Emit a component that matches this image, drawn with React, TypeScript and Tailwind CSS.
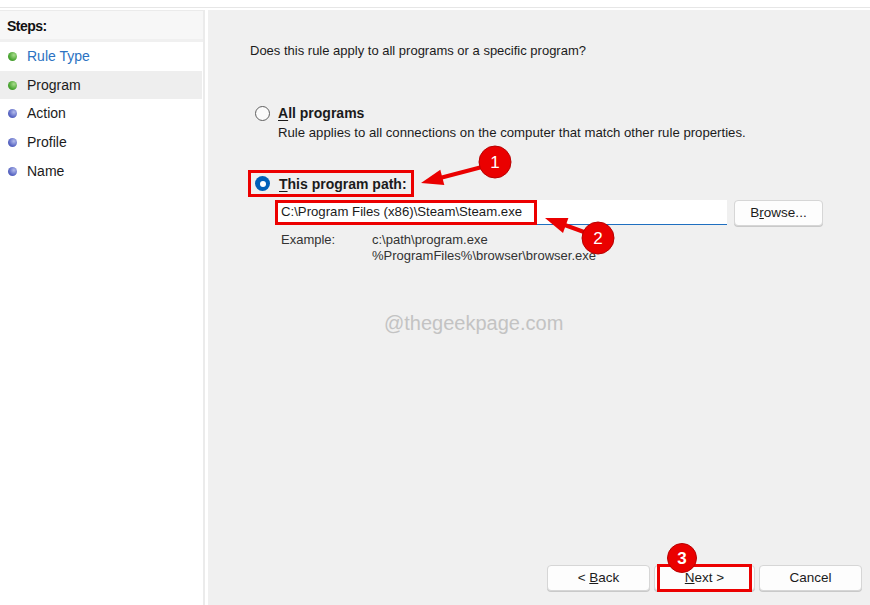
import React from "react";

const font = { fontFamily: '"Liberation Sans", Arial, sans-serif' };

function Step({ label, done, active, link }: { label: string; done?: boolean; active?: boolean; link?: boolean }) {
  return (
    <div className={`flex h-[28.7px] items-center pl-[8px] mr-[1px] ${active ? "bg-[#eeeeee]" : ""}`}>
      <span
        className={`h-[9px] w-[9px] rounded-full ${done ? "bg-[radial-gradient(circle_at_65%_35%,#a8dc8c,#4aa532_60%,#3b8a28)]" : "bg-[radial-gradient(circle_at_65%_35%,#b4bcec,#5a67c4_60%,#4652a8)]"}`}
      />
      <span className={`ml-[10px] text-[14px] ${link ? "text-[#2b72c2]" : "text-[#1b1b1b]"}`}>{label}</span>
    </div>
  );
}

function Btn({ children, w }: { children: React.ReactNode; w: string }) {
  return (
    <div
      className={`${w} flex h-[26px] items-center justify-center rounded-[4px] border border-[#d6d6d6] bg-[#fdfdfd] text-[13.5px] text-[#1b1b1b] shadow-[0_1px_0_#c9c9c9]`}
    >
      {children}
    </div>
  );
}

export default function App() {
  return (
    <div className="relative h-[605px] w-[870px] overflow-hidden bg-white" style={font}>
      <div className="h-[7px]" />
      <div className="h-[1px] bg-[#e6e6e6]" />
      <div className="h-[2px] bg-white" />
      <div className="flex h-[595px]">
        {/* left steps panel */}
        <div className="flex w-[205px] flex-col border-r-[2px] border-t border-[#ebebeb] bg-white">
          <div className="flex h-[28px] flex-col bg-[#f7f7f7]">
            <div className="flex h-[23px] items-end pl-[7px]">
              <span className="text-[14px] font-bold leading-[16px] tracking-[-0.5px] text-[#111]">Steps:</span>
            </div>
          </div>
          <div className="h-[3px] bg-[#f0f0f0]" />
          <div className="flex flex-col">
            <Step label="Rule Type" done link />
            <Step label="Program" done active />
            <Step label="Action" />
            <Step label="Profile" />
            <Step label="Name" />
          </div>
        </div>
        <div className="w-[3px] bg-white" />
        {/* main panel */}
        <div className="flex flex-1 flex-col bg-[#f0f0f0] pl-[42px] text-[13px] text-[#1b1b1b]">
          <div className="mt-[33px] h-[16px] leading-[16px]">Does this rule apply to all programs or a specific program?</div>

          <div className="mt-[46px] flex h-[16px] items-center">
            <span className="ml-[5px] h-[15px] w-[15px] rounded-full border border-[#5f5f5f] bg-[#fbfbfb]" />
            <span className="ml-[8px] text-[14px] font-bold leading-[16px]">
              <span className="underline underline-offset-2">A</span>ll programs
            </span>
          </div>
          <div className="ml-[28px] mt-[4px] h-[16px] text-[13.2px] leading-[16px]">
            Rule applies to all connections on the computer that match other rule properties.
          </div>

          <div className="ml-[-2px] mt-[29px] flex h-[27px] w-[166px] items-center border-[3px] border-[#ec0000] pl-[4px]">
            <span className="flex h-[15px] w-[15px] items-center justify-center rounded-full bg-[#0060b8]">
              <span className="h-[6px] w-[6px] rounded-full bg-white" />
            </span>
            <span className="ml-[9px] whitespace-nowrap text-[14px] font-bold leading-[16px]">
              <span className="underline underline-offset-2">T</span>his program path:
            </span>
          </div>

          <div className="mt-[3px] flex items-start">
            <div className="relative ml-[26px] flex h-[25px] w-[451px] items-center border-b border-[#1f6fc0] bg-white pl-[5px] text-[13.2px]">
              C:\Program Files (x86)\Steam\Steam.exe
              <div className="absolute left-[-1px] top-0 h-[25px] w-[262px] border-[3px] border-[#ec0000]" />
            </div>
            <div className="ml-[7px]">
              <Btn w="w-[89px]">
                <span>
                  B<span className="underline">r</span>owse...
                </span>
              </Btn>
            </div>
          </div>

          <div className="ml-[31px] mt-[6px] flex text-[#333] leading-[16px]">
            <div className="w-[91px]">Example:</div>
            <div className="flex flex-col">
              <span>c:\path\program.exe</span>
              <span>%ProgramFiles%\browser\browser.exe</span>
            </div>
          </div>

          <div className="mt-auto mb-[14px] mr-[8px] flex justify-end">
            <Btn w="w-[103px]">
              <span>
                &lt; <span className="underline">B</span>ack
              </span>
            </Btn>
            <div className="relative ml-[4px]">
              <Btn w="w-[101px]">
                <span>
                  <span className="underline">N</span>ext &gt;
                </span>
              </Btn>
              <div className="absolute left-[3px] top-[-1px] h-[28px] w-[95px] border-[3px] border-[#ec0000]" />
            </div>
            <div className="ml-[4px]">
              <Btn w="w-[103px]">Cancel</Btn>
            </div>
          </div>
        </div>
      </div>

      {/* watermark */}
      <div className="pointer-events-none absolute left-[384px] top-[308px] text-[20px] text-[#c3c3c3]" style={font}>
        @thegeekpage.com
      </div>

      {/* annotations */}
      <svg className="pointer-events-none absolute left-0 top-0" width="870" height="605" viewBox="0 0 870 605">
        <line x1="482" y1="167" x2="440" y2="178" stroke="#ea0000" strokeWidth="4" />
        <polygon points="421,183 440.3,169.7 444.3,185.1" fill="#ea0000" />
        <line x1="584" y1="232" x2="562" y2="224" stroke="#ea0000" strokeWidth="4" />
        <polygon points="545,218 568.4,217.9 563,232.9" fill="#ea0000" />
        <circle cx="495" cy="162" r="16" fill="#ea0000" stroke="#b80000" strokeWidth="1" />
        <circle cx="598" cy="238" r="16" fill="#ea0000" stroke="#b80000" strokeWidth="1" />
        <circle cx="682" cy="558" r="14.5" fill="#ea0000" stroke="#b80000" strokeWidth="1" />
        <text x="495" y="168" textAnchor="middle" fontSize="17" fill="#fff" fontFamily="Liberation Sans, Arial, sans-serif">1</text>
        <text x="598" y="244" textAnchor="middle" fontSize="17" fill="#fff" fontFamily="Liberation Sans, Arial, sans-serif">2</text>
        <text x="682" y="564" textAnchor="middle" fontSize="17" fill="#fff" fontWeight="bold" fontFamily="Liberation Sans, Arial, sans-serif">3</text>
      </svg>
    </div>
  );
}
